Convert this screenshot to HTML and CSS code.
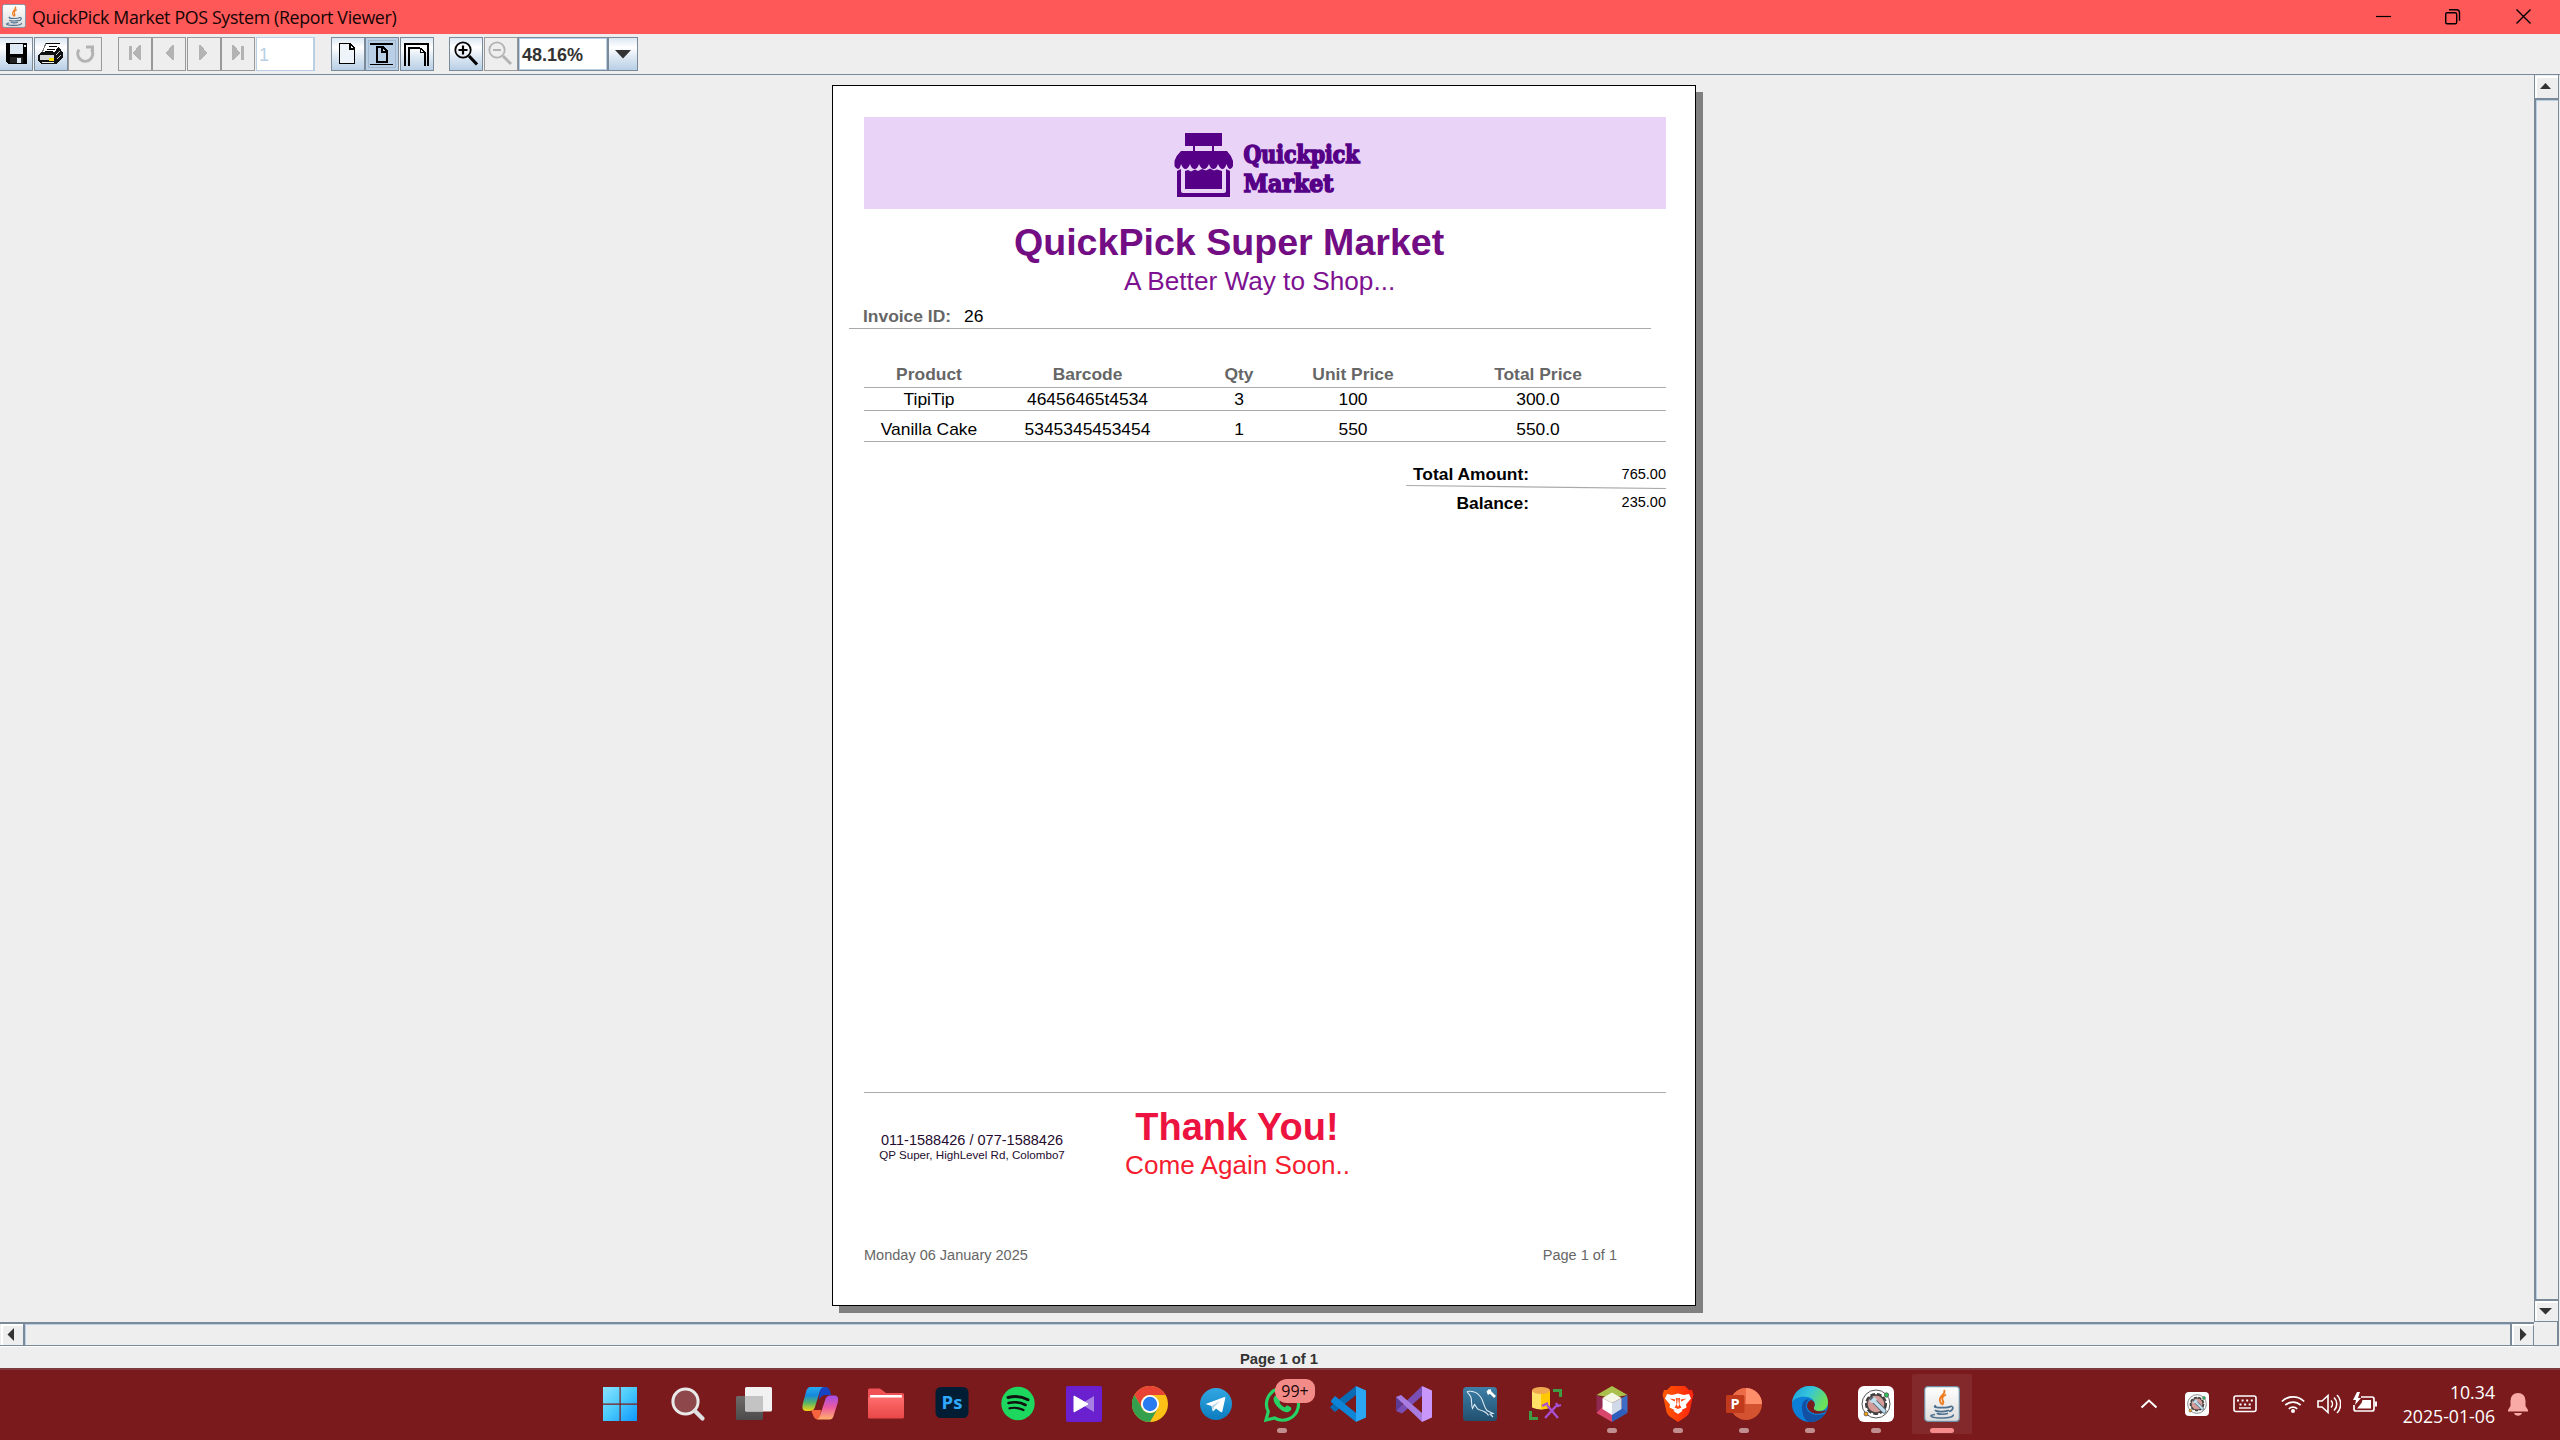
FILE: index.html
```html
<!DOCTYPE html>
<html lang="en">
<head>
<meta charset="utf-8">
<title>QuickPick Market POS System (Report Viewer)</title>
<link rel="stylesheet" href="styles.css">
</head>
<body>
<svg class="defs" width="0" height="0" aria-hidden="true">
  <defs>
    <linearGradient id="win" x1="0" y1="0" x2="1" y2="1"><stop offset="0" stop-color="#8be3ff"/><stop offset=".5" stop-color="#48c9fb"/><stop offset="1" stop-color="#0f96ff"/></linearGradient>
    <linearGradient id="cpA" x1="0" y1="0" x2="0" y2="1"><stop offset="0" stop-color="#28a8f0"/><stop offset=".35" stop-color="#1689dd"/><stop offset=".65" stop-color="#55b36a"/><stop offset="1" stop-color="#f4d512"/></linearGradient>
    <linearGradient id="cpB" x1="0" y1="0" x2="0" y2="1"><stop offset="0" stop-color="#a14de8"/><stop offset=".5" stop-color="#ec5aa0"/><stop offset="1" stop-color="#ffb26b"/></linearGradient>
    <linearGradient id="folder" x1="0" y1="0" x2="0" y2="1"><stop offset="0" stop-color="#ff6c6c"/><stop offset="1" stop-color="#e84747"/></linearGradient>
    <linearGradient id="tv" x1="0" y1="0" x2="0" y2="1"><stop offset="0" stop-color="#6f6a6a"/><stop offset="1" stop-color="#4b4a4a"/></linearGradient>
    <linearGradient id="tg" x1="0" y1="0" x2="0" y2="1"><stop offset="0" stop-color="#32a7e2"/><stop offset="1" stop-color="#0c7cbe"/></linearGradient>
    <linearGradient id="sql" x1="0" y1="0" x2="0" y2="1"><stop offset="0" stop-color="#3d7fa8"/><stop offset="1" stop-color="#22506f"/></linearGradient>
    <linearGradient id="brave" x1="0" y1="0" x2="1" y2="0"><stop offset="0" stop-color="#ff5a00"/><stop offset="1" stop-color="#ff2310"/></linearGradient>
    <linearGradient id="edgeT" x1="0" y1="0" x2="1" y2=".4"><stop offset="0" stop-color="#1c9bd8"/><stop offset=".5" stop-color="#35c5dc"/><stop offset="1" stop-color="#6ce05a"/></linearGradient>
    <linearGradient id="jv" x1="0" y1="0" x2="0" y2="1"><stop offset="0" stop-color="#ffffff"/><stop offset="1" stop-color="#dcdcdc"/></linearGradient>
    <symbol id="java" viewBox="0 0 36 36">
      <rect x=".7" y=".7" width="34.6" height="34.6" rx="3" fill="url(#jv)" stroke="#6f8fa6" stroke-width="1.2"/>
      <path d="M20 4c3 4-6 6-4 11 .5 1.500 1.500 2.500 1.500 3.500M22 8.500c-5 3-4 4.500-3 6.500 .8 1.600 0 3-1 4" fill="none" stroke="#ee7d22" stroke-width="1.900"/>
      <path d="M12 19.500c-4 1.500 1 2.200 6 2.200s8-.8 9-1.400M26 20.500c4-1 4 3.500-1 5M11 24c1 2 11 2 14 .3M13 27c1 1.600 8 1.600 11 .3M11 28.500c-8 1-3 3.500 6 3.500 9 0 13-1.500 12-3.500" fill="none" stroke="#4b6f8e" stroke-width="1.700"/>
    </symbol>
    <symbol id="tool" viewBox="0 0 36 36">
      <rect width="36" height="36" rx="6" fill="#fff"/>
      <circle cx="18" cy="18" r="14" fill="none" stroke="#555" stroke-width="1"/>
      <circle cx="18" cy="18" r="9.500" fill="#c08a88" stroke="#3a3a3a" stroke-width="3" stroke-dasharray="4.500 2"/>
      <circle cx="18" cy="18" r="9" fill="#d59b98" stroke="#4a4545" stroke-width="1.500"/>
      <path d="M14.500 13.500 26 25" stroke="#4c6475" stroke-width="5" stroke-linecap="round"/>
      <path d="M15 14 26 25" stroke="#c3dcea" stroke-width="3.200" stroke-linecap="round"/>
      <path d="M11 15a4.500 4.500 0 0 0 8-1.500l-3.500-3.500-.5 3.500z" fill="#c3dcea"/>
      <circle cx="28.500" cy="9" r="2.200" fill="#2fc45b" stroke="#333" stroke-width=".6"/>
      <circle cx="8" cy="28" r="2" fill="#f0a51c" stroke="#333" stroke-width=".6"/>
    </symbol>
  </defs>
</svg>

<div class="screen">
  <header class="titlebar">
    <svg class="app-icon" viewBox="0 0 36 36"><use href="#java"/></svg>
    <span class="caption">QuickPick Market POS System (Report Viewer)</span>
    <svg class="window-controls" viewBox="2370 0 170 34">
      <path d="M2376 16.500h15" stroke="#000" stroke-width="1.200"/>
      <g fill="none" stroke="#000" stroke-width="1.400"><rect x="2445.700" y="12.700" width="11" height="11" rx="1.500"/><path d="M2449 9.700h7.500a3 3 0 0 1 3 3v8"/></g>
      <path d="m2516.500 9.500 14 14m0-14-14 14" stroke="#000" stroke-width="1.400"/>
    </svg>
  </header>

  <div class="toolbar">
    <div class="group">
      <button class="tool save"><svg viewBox="0 37 33 34" shape-rendering="crispEdges"><path d="M6 43h20l1 1v20H8l-2-2z" fill="#000"/><path d="M10 44h13v10H10z" fill="#dfe9f3"/><path d="M10 57h13v6H10z" fill="#222"/><path d="M17 58h4v5h-4z" fill="#dfe9f3"/><path d="M24 45h2v2h-2z" fill="#dfe9f3"/></svg></button>
      <button class="tool"><svg viewBox="34 37 34 34" shape-rendering="crispEdges"><path d="M46 43h14l-4 10H42z" fill="#fff"/><path d="M46 43.700h14M49 46.500h8M47 49.500h8M45 52h8" stroke="#000" stroke-width="1.400"/><path d="M46 43 42 53" stroke="#777" stroke-width="1"/><path d="m39 54 3-2h13l3-5 3 2v2l2 2v4l-6 7H41l-3-3v-5z" fill="#111"/><path d="M40 55h14v5H40z" fill="#d8d8d8"/><path d="M42 62h12v1H42z" fill="#eee"/><path d="M49 58h5v3h-5z" fill="#ffe600"/><path d="m56 55 4-4M57 59l4-4" stroke="#c8c8c8" stroke-width="1"/></svg></button>
      <button class="tool off"><svg viewBox="68 37 34 34"><path d="M79 49.500a7.500 7.500 0 1 0 12.500 0" fill="none" stroke="#b3b3b3" stroke-width="3"/><path d="M86 45.500h8v8h-3v-5h-5z" fill="#b3b3b3"/></svg></button>
    </div>
    <div class="group">
      <button class="tool off"><svg viewBox="118 37 34 34" shape-rendering="crispEdges"><path d="M129 46h3v14h-3zM141 45v15h-2l-6-7 6-8z" fill="#b3b3b3"/></svg></button>
      <button class="tool off"><svg viewBox="152 37 34 34" shape-rendering="crispEdges"><path d="M174 45v15h-2l-6-7 6-8z" fill="#b3b3b3"/></svg></button>
      <button class="tool off next"><svg viewBox="187 37 34 34" shape-rendering="crispEdges"><path d="M199 45v15h2l6-7-6-8z" fill="#b3b3b3"/></svg></button>
      <button class="tool off"><svg viewBox="221 37 34 34" shape-rendering="crispEdges"><path d="M241 46h3v14h-3zM232 45v15h2l6-7-6-8z" fill="#b3b3b3"/></svg></button>
      <div class="page-field">1</div>
    </div>
    <div class="group">
      <button class="tool"><svg viewBox="331 37 34 34" shape-rendering="crispEdges"><path d="M339.500 43.500h11l4 5v15h-15z" fill="#eef4fa" stroke="#000" stroke-width="1.400"/><path d="M350 44v5h5" fill="none" stroke="#000" stroke-width="1.400"/></svg></button>
      <button class="tool on"><svg viewBox="365 37 34 34" shape-rendering="crispEdges"><path d="M370 43h23v2h-23zM370 64h23v1h-23z" fill="#000"/><path d="M377 47h6l4 4v11h-10z" fill="none" stroke="#000" stroke-width="2"/><path d="M382 47v5h5" fill="none" stroke="#000" stroke-width="1.400"/></svg></button>
      <button class="tool gapped"><svg viewBox="400 37 34 34" shape-rendering="crispEdges"><path d="M405 66V44h23v22" fill="none" stroke="#000" stroke-width="2.200"/><path d="M409 66V48h11l5 4v14" fill="none" stroke="#000" stroke-width="1.300"/><path d="M420 48v4h5" fill="none" stroke="#000"/></svg></button>
    </div>
    <div class="group zoom">
      <button class="tool"><svg viewBox="449 37 34 34"><circle cx="463" cy="50" r="7.700" fill="none" stroke="#000" stroke-width="1.800"/><path d="M463 45.500v9M458.500 50h9" stroke="#000" stroke-width="2.200"/><path d="m469 56 8 8.500" stroke="#000" stroke-width="3.200"/></svg></button>
      <button class="tool off gapped"><svg viewBox="484 37 34 34"><circle cx="497" cy="50" r="7.700" fill="none" stroke="#b3b3b3" stroke-width="1.800"/><path d="M493 50h8" stroke="#b3b3b3" stroke-width="2"/><path d="m503 56 8 8" stroke="#b3b3b3" stroke-width="3"/></svg></button>
      <div class="combo"><span class="combo-value">48.16%</span><button class="combo-arrow"><svg viewBox="0 0 30 34"><path d="M7 13h16l-8 8.500z" fill="#333"/></svg></button></div>
    </div>
  </div>

  <main class="viewer">
    <div class="viewport">
      <article class="sheet">
        <div class="banner">
          <svg class="brand" viewBox="1170 125 195 75">
            <g fill="#560088">
              <path d="M1185 133h37v13h-8v5h-2v-5h-17v5h-2v-5h-8z"/>
              <path d="M1180 151h47q4 4 6 10v5q-1 3-3 3t-3.500-5q-1.500 5-4 5t-4.500-5q-1.500 5-4.500 5t-4.500-5q-2 5-5 5t-5-5q-1.500 5-4.500 5t-4.500-5q-2 5-4.500 5t-4.500-5q-1 5-3 5t-3.500-3v-5q2-6 6.500-10z"/>
              <path fill-rule="evenodd" d="M1177 171l4-2v22q0 2 2 2h41q2 0 2-2v-22l4 2v26h-53z"/>
              <path d="M1185 171l3-1 3 1.500 4-2 3 1.500 4-2 4 1.500 4-2 4 2 3-1 5 1.500v18h-37z"/>
            </g>
            <g class="brand-text">
              <text x="1243.500" y="162.500" textLength="116" lengthAdjust="spacingAndGlyphs">Quickpick</text>
              <text x="1243.500" y="191.500" textLength="90" lengthAdjust="spacingAndGlyphs">Market</text>
            </g>
          </svg>
        </div>
        <h1 class="store">QuickPick Super Market</h1>
        <p class="slogan">A Better Way to Shop...</p>
        <div class="invoice"><b>Invoice ID:</b><span>26</span></div>
        <div class="items">
          <div class="row head"><span>Product</span><span>Barcode</span><span>Qty</span><span>Unit Price</span><span>Total Price</span></div>
          <div class="row first"><span>TipiTip</span><span>46456465t4534</span><span>3</span><span>100</span><span>300.0</span></div>
          <div class="row second"><span>Vanilla Cake</span><span>5345345453454</span><span>1</span><span>550</span><span>550.0</span></div>
        </div>
        <div class="totals">
          <div class="total"><b>Total Amount:</b><span>765.00</span></div>
          <svg class="slope" viewBox="0 0 260 5"><path d="M0 1.500 260 4.500" stroke="#aaa" stroke-width="1.200"/></svg>
          <div class="total balance"><b>Balance:</b><span>235.00</span></div>
        </div>
        <footer class="sheet-foot">
          <div class="closing">
            <div class="contact"><p class="phone">011-1588426 / 077-1588426</p><p class="address">QP Super, HighLevel Rd, Colombo7</p></div>
            <div class="thanks"><h2>Thank You!</h2><p>Come Again Soon..</p></div>
          </div>
          <div class="pageline"><span>Monday 06 January 2025</span><span>Page 1 of 1</span></div>
        </footer>
      </article>
    </div>
    <div class="vbar">
      <div class="arrow up"><svg viewBox="0 0 22 22"><path d="M4 13 9.500 7 15 13z" fill="#333"/></svg></div>
      <div class="vthumb"></div>
      <div class="arrow down"><svg viewBox="0 0 22 22"><path d="M3 7h13l-6.500 6.500z" fill="#333"/></svg></div>
    </div>
    <div class="hbar">
      <div class="arrow left"><svg viewBox="0 0 22 22"><path d="M11 4v13L4.500 10.500z" fill="#333"/></svg></div>
      <div class="hthumb"></div>
      <div class="arrow right"><svg viewBox="0 0 22 22"><path d="M6 4v13l6.500-6.500z" fill="#333"/></svg></div>
    </div>
    <div class="corner"></div>
  </main>

  <div class="status">Page 1 of 1</div>

  <nav class="taskbar">
    <div class="apps">
      <div class="app start"><svg viewBox="0 0 36 36"><path d="M1 1h16.500v16.500H1zM18.700 1H35v16.500H18.700zM1 18.700h16.500V35H1zM18.700 18.700H35V35H18.700z" fill="url(#win)"/></svg></div>
      <div class="app"><svg viewBox="0 0 36 36"><circle cx="15.500" cy="15.500" r="12.600" fill="#8e474a" stroke="#e9e9ea" stroke-width="3"/><path d="m25 25 7.500 7.500" stroke="#dfe0e2" stroke-width="4.200" stroke-linecap="round"/></svg></div>
      <div class="app"><svg viewBox="0 0 36 36"><rect y="10" width="27" height="24" rx="1.500" fill="url(#tv)"/><rect x="9" y="1" width="27" height="24.500" rx="1.500" fill="#f1f1f1"/><path d="M9 10h18v15.500H10.500L9 24z" fill="#c4c3c3"/></svg></div>
      <div class="app"><svg viewBox="0 0 36 36"><path d="M18 1h5c3 0 4 1.500 5 4l1 4h-4c-4 0-6 1-8 5z" fill="#1744c4"/><path d="M9 1h13c-3 0-4 3-5 7l-4 13c-1 3-3 4-6 4H4c-4 0-4-4-3-8l3-11C5 2.500 6 1 9 1z" fill="url(#cpA)"/><path d="M9 24h10l-1 9c-4 1-6-.5-7-4z" fill="#f7633e"/><path d="M27 33.500H14c3 0 4-3 5-7l4-12c1-4 3-5 6-5h4c3 0 4 4 2.500 8l-3.500 11c-1 4-2 5-5 5z" fill="url(#cpB)"/></svg></div>
      <div class="app"><svg viewBox="0 0 36 36"><path d="M0 4q0-1.500 1.500-1.500H12l6 4.500h16.500q1.500 0 1.500 1.500V15H0z" fill="#ef5154"/><rect x="2" y="9" width="32" height="6" rx="1" fill="#fff"/><path d="M0 11.500h36V31q0 1.500-1.500 1.500h-33Q0 32.500 0 31z" fill="url(#folder)"/></svg></div>
      <div class="app"><svg viewBox="0 0 36 36"><rect x="1.500" y="1" width="33" height="31" rx="5.500" fill="#001d33"/><text class="ps" x="18" y="23.200" text-anchor="middle">Ps</text></svg></div>
      <div class="app"><svg viewBox="0 0 36 36"><circle cx="18" cy="17.500" r="16.700" fill="#1ed75f"/><g fill="none" stroke="#111" stroke-linecap="round"><path d="M8 11.500c7-1.800 14-1 20 2.200" stroke-width="3"/><path d="M8.500 17c6-1.500 12-.8 17 2" stroke-width="2.600"/><path d="M9.500 22.300c5-1.200 9-.6 14 1.800" stroke-width="2.200"/></g></svg></div>
      <div class="app"><svg viewBox="0 0 36 36"><rect width="36" height="36" rx="2" fill="#6a20cf"/><path d="M28 10v16L15 18z" fill="#a780e3"/><path d="M8 10v16l14-8z" fill="#fff" stroke="#fff" stroke-linejoin="round"/></svg></div>
      <div class="app"><svg viewBox="0 0 36 36"><circle cx="18" cy="18" r="18" fill="#fbc116"/><path d="M2.400 9A18 18 0 0 1 33.600 9H18a9 9 0 0 0-7.800 13.500z" fill="#e94335"/><path d="M2.400 9A18 18 0 0 0 18 36l7.800-13.500a9 9 0 0 1-15.600 0z" fill="#34a04e"/><circle cx="18" cy="18" r="9" fill="#fff"/><circle cx="18" cy="18" r="7.200" fill="#2a7bf0"/></svg></div>
      <div class="app"><svg viewBox="0 0 36 36"><circle cx="18" cy="18" r="16" fill="url(#tg)"/><path d="M7.500 18 26.500 11q1-.2.800 1l-3 13.500q-.4 1.300-1.600.5L18 22.500 15.500 25q-.8.600-1-.4L13.500 20z" fill="#fff"/><path d="m13.500 20 9-5.500L16 21l-.8 3.500z" fill="#b7d6ea"/></svg></div>
      <div class="app"><svg viewBox="0 0 36 36"><path d="M2 34 4.300 25.500A16 16 0 1 1 10.500 32z" fill="none" stroke="#27d265" stroke-width="3.200"/><path d="M12 9.500c-3 1-3.500 5 0 9.500s8.500 8 12 7 4-4 2.500-5l-3-1.500c-1.500 0-1.800 2-3 1.700-2-.8-4-2.700-5-5 0-1 1.500-1.500 1-3z" fill="#27d265"/></svg><span class="badge">99+</span><i class="dot"></i></div>
      <div class="app"><svg viewBox="0 0 36 36"><path d="M26 0v9L5 26l-5-4.500L1 20z" fill="#0a6bb5"/><path d="M1 14.500 5 10l21 17v9L1 16z" fill="#0e85d6"/><path d="M26 0l10 4.500v27L26 36z" fill="#2aa6f3"/></svg></div>
      <div class="app"><svg viewBox="0 0 36 36"><path d="M0 11 6 9v18l-6-3z" fill="#5b3b93"/><path d="M0 25 26 0v10L6 27.500z" fill="#7a4fb5"/><path d="M0 11 5 9l21 18v9z" fill="#a87be0"/><path d="M26 0l10 4.500v27L26 36z" fill="#c997fb"/></svg></div>
      <div class="app"><svg viewBox="0 0 36 36"><rect x="1" y="1" width="34" height="34" rx="3.500" fill="url(#sql)"/><path d="M5 5.500c6-1 11 1 14 6s3 10 6 13l6 3-3 .5 3 3M5 5.500c1 2 3 3 4 6s0 8 1.500 11l2-4c2 2 2 4 4 5 4 1 8 2 10 6" fill="none" stroke="#dceaf3" stroke-width="1.100"/><path d="m26 4 7 7" stroke="#fff" stroke-width="2.600"/><path d="M24.500 5.500 29 3v4l-3 2z" fill="#fff"/></svg></div>
      <div class="app"><svg viewBox="0 0 36 36"><path d="M25 3h9v8h-3V6h-6zM1 25h3v6h6v3H1z" fill="#3f9c45"/><path d="M4 4.500v17q9 4 18 0v-17z" fill="#ffe266"/><path d="M13 7v16.500q6-.3 9-2v-17z" fill="#ffc800"/><ellipse cx="13" cy="4.500" rx="9" ry="3.400" fill="#f0a850"/><path d="M17 32 30 18M19 19l11 13M14 20l6-3" stroke="#a84fd6" stroke-width="2.300"/><path d="m28 17 2 3 3-1" fill="none" stroke="#a84fd6" stroke-width="2.200"/></svg></div>
      <div class="app"><svg viewBox="0 0 36 36"><path d="M18 0 33.500 9 18 12 2.500 9z" fill="#a9c04c"/><path d="M2.500 9v18l6-4V12z" fill="#8f2950"/><path d="M33.500 9v18l-6-4V12z" fill="#3f6cc4"/><path d="M2.500 27 18 36V26l-9.500-5z" fill="#d8466c"/><path d="M33.500 27 18 36V26l9.500-5z" fill="#2f5fbd"/><path d="m18 6.500 9.500 5.500L18 17l-9.500-5z" fill="#f4f7e6"/><path d="M8.500 12v11l9.500 6V17z" fill="#fff"/><path d="M27.500 12v11L18 29V17z" fill="#cfd9e8"/></svg><i class="dot"></i></div>
      <div class="app"><svg viewBox="0 0 36 36"><path d="M11 0h14l4 4h3l1.500 5-1 3-3 14q-1 3-4 5l-7.500 5-7.500-5q-3-2-4-5L3.500 12l-1-3L4 4h3z" fill="url(#brave)"/><path d="m7 8 5 1 6-1.500L24 9l5-1 2 4.500-5 6 .5 3-5 2.500 1 1L18 28l-4.500-3 1-1-5-2.500.5-3-5-6z" fill="#fff"/><path d="m9.500 12.500 6 1-1 2zM26.500 12.500l-6 1 1 2zM16 12h4l-.5 6.500 2 3L18 23l-3.500-1.500 2-3z" fill="#ff4510"/><path d="m18 11 1 8-1 2-1-2z" fill="#fff"/></svg><i class="dot"></i></div>
      <div class="app"><svg viewBox="0 0 36 36"><circle cx="20" cy="18" r="16" fill="#d35230"/><path d="M20 2a16 16 0 0 0-16 16h16z" fill="#ed6c47"/><path d="M20 2a16 16 0 0 1 16 16H20z" fill="#ff8f6b"/><rect y="9" width="18.500" height="18" rx="1.600" fill="#c13a1c"/><text class="pp" x="9" y="23" text-anchor="middle">P</text></svg><i class="dot"></i></div>
      <div class="app"><svg viewBox="0 0 36 36"><circle cx="18" cy="18" r="18" fill="#0b7fd8"/><path d="M0 17C1 6 9 0 18 0c10 0 18 7 18 16 0 6-4 9-9 9-5 0-7-2-5-4 2-3 0-9-7-10S2 12 0 17z" fill="url(#edgeT)"/><path d="M10 21c0-6 4-8 7-8-2 2-3 5-3 7 0 6 6 9 12 9 3 0 6-1 7.500-2C30 33 24 36 18 36c-5 0-8-7-8-15z" fill="#1350a4"/><path d="M22 21c2-3 0-6-3-7-4 2-5 6-3 9 3 5 10 6 17 3l1.500-2c-4 2-14 2-12.500-3z" fill="#7a1a1c"/></svg><i class="dot"></i></div>
      <div class="app"><svg viewBox="0 0 36 36"><use href="#tool"/></svg><i class="dot"></i></div>
      <div class="app active"><svg viewBox="0 0 36 36"><use href="#java"/></svg><i class="dot"></i></div>
    </div>
    <div class="tray">
      <svg viewBox="0 0 24 24"><path d="m4.500 15.500 7.500-7 7.500 7" fill="none" stroke="#fff" stroke-width="2"/></svg>
      <svg viewBox="0 0 36 36"><use href="#tool"/></svg>
      <svg viewBox="0 0 24 24"><rect x="1" y="4" width="22" height="15.500" rx="2" fill="none" stroke="#fff" stroke-width="1.600"/><path d="M4 8.500h16" stroke="#fff" stroke-width="2" stroke-dasharray="2 2.600"/><path d="M6.500 12.500h12" stroke="#fff" stroke-width="2" stroke-dasharray="2 2.600"/><path d="M6 16h12" stroke="#fff" stroke-width="1.400"/></svg>
      <svg viewBox="0 0 24 24"><g fill="none" stroke="#fff" stroke-width="1.700"><path d="M.8 9.500a16 16 0 0 1 22.400 0M4.300 13.200a11 11 0 0 1 15.400 0M7.800 16.800a6 6 0 0 1 8.400 0"/></g><circle cx="12" cy="19" r="2" fill="#fff"/></svg>
      <svg class="near" viewBox="0 0 24 24"><g fill="none" stroke="#fff" stroke-width="1.600"><path d="M1 9h4l6-5.500v17L5 15H1zM14 8.500a5 5 0 0 1 0 7M17 5.500a9 9 0 0 1 0 13M20 3a13 13 0 0 1 0 18"/></g></svg>
      <svg class="near" viewBox="0 0 24 24"><path d="M8 5h11q2 0 2 2v10q0 2-2 2H3q-2 0-2-2v-4" fill="none" stroke="#fff" stroke-width="1.700"/><path d="M22 9.500h2v5h-2zM9.500 8H18v8.500H4L8.500 11z" fill="#fff"/><path d="M4 0 0 8h3l-1 5 6-7H5l2-6z" fill="#fff"/></svg>
      <div class="clock"><span>10.34</span><span>2025-01-06</span></div>
      <svg class="bell" viewBox="0 0 20 24"><path d="M10 1q7 0 7.500 7.500V14L20 18v1.500H0V18l2.500-4V8.500Q3 1 10 1zM6 21h8q-1 2.800-4 2.800T6 21z" fill="#faaaa6"/></svg>
    </div>
  </nav>
</div>
</body>
</html>
```
FILE: styles.css
```css
* { box-sizing: border-box; }
body { margin: 0; font-family: "Liberation Sans", Arial, sans-serif; }
h1, h2, p { margin: 0; font-weight: normal; }
button { padding: 0; font: inherit; }
svg { display: block; }
.defs { position: absolute; }

.screen { width: 2560px; height: 1440px; overflow: hidden; display: flex; flex-direction: column; background: #eee; }

/* Window title */
.titlebar { height: 34px; flex: none; background: #ff5858; display: flex; align-items: center; }
.app-icon { width: 24px; height: 24px; margin: 0 6px 2px 2px; }
.caption { font: 17.8px/34px "Open Sans", "Noto Sans", sans-serif; letter-spacing: -.34px; color: #140505; }
.window-controls { width: 170px; height: 34px; margin: 0 20px 0 auto; }

/* Viewer toolbar */
.toolbar { height: 41px; flex: none; display: flex; gap: 16px; padding-top: 3px; border-bottom: 1px solid #7a8a99; }
.group { display: flex; height: 34px; }
.zoom { margin-left: -1px; }
.tool { width: 34px; height: 34px; border: 1px solid #7a8a99; background: linear-gradient(#dde8f3, #fff 30%, #dde8f3 60%, #b8cfe5); overflow: hidden; }
.tool svg { width: 34px; height: 34px; margin: -1px; }
.save { width: 33px; border-left: 0; margin-right: 1px; }
.save svg { width: 33px; margin-left: 0; }
.off { background: #eee; border-color: #999; }
.on { background: #b8cfe5; box-shadow: inset 0 0 0 2px #b8cfe5, inset 0 0 0 3px #a3b8cc; }
.next, .gapped { margin-left: 1px; }
.page-field { width: 59px; margin-left: 1px; border: 1px solid #b8cfe5; border-right-width: 2px; background: #fff; padding-left: 2px; font-size: 18px; line-height: 35px; color: #b8cfe5; }
.combo { display: flex; width: 120px; }
.combo-value { width: 90px; background: #fff; border: 1px solid #7a8a99; box-shadow: inset 0 0 0 1px #b8cfe5; padding-left: 3px; font-size: 18px; font-weight: bold; line-height: 34px; color: #333; }
.combo-arrow { width: 30px; border: 1px solid #7a8a99; background: linear-gradient(#dde8f3, #fff 30%, #dde8f3 60%, #b8cfe5); }
.combo-arrow svg { width: 30px; height: 34px; margin: -1px; }

/* Scrollable area */
.viewer { height: 1272px; flex: none; display: grid; grid-template: 1247px 25px / 2534px 26px; }
.viewport { padding: 10px 0 0 832px; }
.arrow { flex: none; width: 22px; height: 22px; border: 1px solid #fff; border-width: 2px 0 0 2px; }
.arrow svg { width: 22px; height: 22px; margin: -2px 0 0; }
.vbar { display: flex; flex-direction: column; border-left: 1px solid #7a8a99; margin-right: 1px; border-right: 1px solid #7a8a99; padding-top: 1px; }
.vbar .arrow { width: 23px; }
.vbar .arrow svg { margin-left: -1px; }
.vthumb { flex: 1; border-top: 2px solid #7a8a99; border-bottom: 2px solid #7a8a99; border-left: 1px solid #7a8a99; box-shadow: inset 1px 1px #b8cfe5; }
.vbar .down { height: 21px; border-bottom: 0; }
.hbar { display: flex; border-top: 2px solid #7a8a99; border-bottom: 1px solid #fff; padding-left: 1px; box-shadow: inset 0 -1px #7a8a99; }
.hbar .arrow { height: 21px; }
.hbar .right { border-right: 1px solid #7a8a99; width: 22px; }
.hthumb { flex: 1; height: 21px; border-left: 2px solid #7a8a99; border-right: 2px solid #7a8a99; box-shadow: inset 1px 1px #b8cfe5; }
.corner { margin: -1px 1px 1px 0; border: solid #7a8a99; border-width: 1px 2px 1px 0; }
.status { height: 21px; flex: none; text-align: center; padding-right: 2px; font-size: 14.8px; font-weight: bold; line-height: 25px; color: #333; }

/* Report page */
.sheet { width: 864px; height: 1221px; padding: 31px 29px 41px 31px; background: #fff; border: 1px solid #000; box-shadow: 7px 7px 0 #808080; display: flex; flex-direction: column; font-size: 17.42px; line-height: 20px; color: #000; }
.banner { height: 92px; flex: none; background: #e9d3f7; padding: 8px 0 0 306px; }
.brand { width: 195px; height: 75px; overflow: visible; }
.brand-text { font: bold 24px "DejaVu Serif", serif; fill: #560088; stroke: #560088; stroke-width: 1.6; }
.store { margin-top: 11px; padding-left: 150px; font-size: 37.6px; font-weight: bold; line-height: 44px; color: #730d84; }
.slogan { margin-top: 2px; padding-left: 260px; font-size: 26.2px; line-height: 30px; color: #7d1190; }
.invoice { margin: 10px 15px 0 -15px; padding: 0 0 2px 14px; border-bottom: 1px solid #aaa; display: flex; gap: 13px; }
.invoice b, .head { color: #666; }
.items { margin-top: 35px; }
.row { display: grid; grid-template-columns: 130px 187px 116px 112px 258px; border-bottom: 1px solid #aaa; text-align: center; }
.head { font-weight: bold; padding-bottom: 3px; }
.first { padding: 1px 0; }
.second { padding: 8px 0 2px; }
.totals { width: 260px; margin: 22px 0 0 auto; }
.total { display: flex; justify-content: space-between; }
.total b { width: 123px; text-align: right; white-space: nowrap; display: flex; justify-content: flex-end; }
.total span { font-size: 14.52px; }
.slope { width: 260px; height: 5px; }
.balance { margin-top: 4px; }
.balance span { margin-top: -1px; }
.sheet-foot { margin-top: auto; border-top: 1px solid #aaa; padding-top: 12px; }
.closing { display: flex; height: 141px; }
.contact { width: 216px; padding-top: 27px; text-align: center; color: #250b2f; }
.phone { font-size: 14.52px; line-height: 16px; }
.address { font-size: 11.62px; line-height: 14px; }
.thanks { width: 314px; text-align: center; }
.thanks h2 { font-size: 38px; font-weight: bold; line-height: 44px; color: #ec1340; }
.thanks p { margin-top: 1px; padding-left: 1px; font-size: 26.1px; line-height: 30px; color: #f51d2f; }
.pageline { display: flex; justify-content: space-between; padding-right: 49px; font-size: 14.52px; line-height: 18px; color: #666; }

/* Desktop taskbar */
.taskbar { height: 72px; flex: none; background: #7a1a1c; border-top: 2px solid #7d393c; display: flex; }
.apps { display: flex; padding-left: 587px; }
.app { position: relative; width: 66px; height: 70px; padding: 16px 15px; }
.start { margin-right: 2px; }
.app svg { width: 36px; height: 36px; }
.dot { position: absolute; left: 28px; top: 58px; width: 10px; height: 5px; border-radius: 3px; background: #c28f91; }
.active { margin: 4px 0 6px; height: 60px; padding: 12px 15px; border-radius: 6px; background: linear-gradient(#fff1, #fff1) 3px 0 / 60px 60px no-repeat; }
.active .dot { left: 21px; top: 54px; width: 24px; background: #f58b8b; }
.badge { position: absolute; left: 26px; top: 9px; width: 40px; height: 24px; border-radius: 12px 9px 9px 12px; background: #f38b88; font: 16px/24px "Open Sans", sans-serif; text-align: center; color: #1c0808; z-index: 1; }
.ps { font: bold 18.500px "Open Sans", sans-serif; fill: #31a8ff; }
.pp { font: bold 14.500px "Open Sans", sans-serif; fill: #fff; }
.tray { margin-left: auto; padding: 22px 32px 0 0; display: flex; gap: 24px; }
.tray svg { width: 24px; height: 24px; }
.tray .near { margin-left: -12px; }
.clock { width: 93px; margin: -12px -11px 0 1px; font: 17.7px/24px "Open Sans", sans-serif; color: #fff; display: flex; flex-direction: column; align-items: flex-end; white-space: nowrap; }
.tray .bell { width: 20px; }
```
